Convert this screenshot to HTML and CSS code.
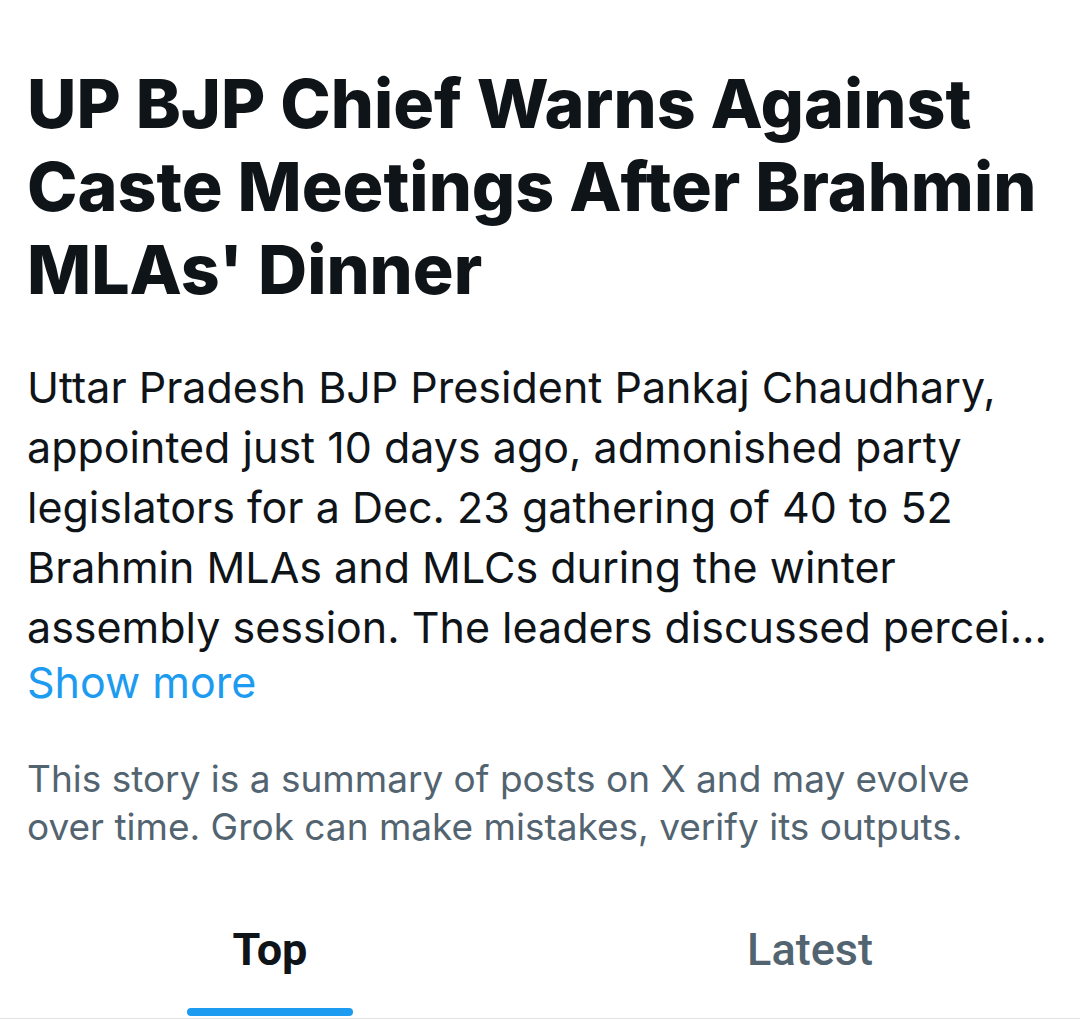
FILE: index.html
```html
<!DOCTYPE html>
<html>
  <head>
    <meta charset="utf-8">
    <link rel="stylesheet" href="styles.css">
  </head>
  <body>
    <main class="story">
      <article class="story-body">
        <h1 class="headline">UP BJP Chief Warns Against Caste Meetings After Brahmin MLAs' Dinner</h1>

        <p class="summary">Uttar Pradesh BJP President Pankaj Chaudhary, appointed just 10 days ago, admonished party legislators for a Dec. 23 gathering of 40 to 52 Brahmin MLAs and MLCs during the winter assembly session. The leaders discussed percei…</p>
        <a class="show-more" href="#">Show more</a>

        <p class="disclaimer">This story is a summary of posts on X and may evolve over time. Grok can make mistakes, verify its outputs.</p>
      </article>

      <nav class="tabs">
        <a class="tab active" href="#"><span>Top</span></a>
        <a class="tab" href="#"><span>Latest</span></a>
      </nav>
    </main>
  </body>
</html>
```

FILE: styles.css
```css
html, body {
  margin: 0;
  padding: 0;
  background-color: #ffffff;
}

body {
  font-family: Inter, "Noto Sans", sans-serif;
  color: #0f1419;
}

.story-body {
  padding: 62px 27px 0 27px;
}

.headline {
  margin: 0;
  font-size: 68px;
  line-height: 83px;
  font-weight: 800;
}

.summary {
  margin: 46px 0 0 0;
  font-size: 43px;
  line-height: 60px;
  font-weight: 400;
}

.show-more {
  display: block;
  font-size: 43px;
  line-height: 50px;
  color: #1d9bf0;
  text-decoration: none;
}

.disclaimer {
  margin: 48px 0 0 0;
  font-size: 37px;
  line-height: 48px;
  color: #536471;
}

.tabs {
  display: flex;
  margin-top: 62px;
  border-bottom: 1px solid #e1e4e6;
}

.tab {
  flex: 1;
  display: flex;
  justify-content: center;
  text-decoration: none;
  font-family: Roboto, sans-serif;
  font-size: 45px;
  font-weight: 500;
  color: #536471;
}

.tab span {
  padding: 10px 0 42px 0;
}

.tab.active {
  color: #0f1419;
  font-weight: 700;
}

.tab.active span {
  position: relative;
}

/* blue pill under the selected tab */
.tab.active span::after {
  content: "";
  position: absolute;
  left: -46px;
  right: -46px;
  bottom: 2px;
  height: 8px;
  border-radius: 4px;
  background-color: #1d9bf0;
}
```
